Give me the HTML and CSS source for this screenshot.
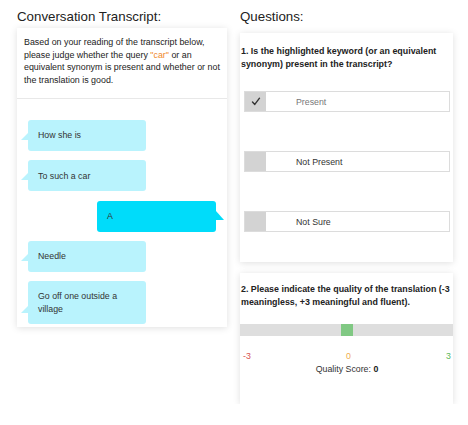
FILE: index.html
```html
<!DOCTYPE html>
<html>
<head>
<meta charset="utf-8">
<link rel="stylesheet" href="styles.css">
</head>
<body>
<div class="page">
  <div class="col col-left">
    <h2 class="title">Conversation Transcript:</h2>
    <div class="card transcript">
      <p class="intro">Based on your reading of the transcript below, please judge whether the query <span class="kw">"car"</span> or an equivalent synonym is present and whether or not the translation is good.</p>
      <div class="chat">
        <div class="bubble in">How she is</div>
        <div class="bubble in">To such a car</div>
        <div class="bubble out">A</div>
        <div class="bubble in">Needle</div>
        <div class="bubble in">Go off one outside a village</div>
      </div>
    </div>
  </div>
  <div class="col col-right">
    <h2 class="title">Questions:</h2>
    <div class="card q1">
      <p class="question">1. Is the highlighted keyword (or an equivalent synonym) present in the transcript?</p>
      <div class="options">
        <div class="option"><span class="box"><svg width="10" height="9" viewBox="0 0 10 9"><path d="M1.5 5 L3.8 7.4 L8.5 1.2" fill="none" stroke="#333" stroke-width="1.4" stroke-linecap="round" stroke-linejoin="round"/></svg></span><span class="opt-label light">Present</span></div>
        <div class="option"><span class="box"></span><span class="opt-label">Not Present</span></div>
        <div class="option"><span class="box"></span><span class="opt-label">Not Sure</span></div>
      </div>
    </div>
    <div class="card q2">
      <p class="question">2. Please indicate the quality of the translation (-3 meaningless, +3 meaningful and fluent).</p>
      <div class="slider"><span class="thumb"></span></div>
      <div class="scale"><span class="neg">-3</span><span class="mid">0</span><span class="pos">3</span></div>
      <div class="score">Quality Score: <b>0</b></div>
    </div>
  </div>
</div>
</body>
</html>
```
FILE: styles.css
```css
* { box-sizing: border-box; }
html, body { margin: 0; padding: 0; background: #fff; }
body { font-family: "Liberation Sans", Arial, sans-serif; color: #333; }
.page { display: flex; gap: 13px; padding: 8px 0 0 17px; }
.col-left { width: 210px; }
.col-right { width: 213px; }
.title { font-weight: normal; font-size: 13.3px; color: #222; margin: 0; line-height: 18px; }
.card { background: #fff; box-shadow: 0 1px 7px rgba(0,0,0,0.13); }
.transcript { margin-top: 2px; padding-bottom: 3px; }
.intro { font-size: 8.9px; line-height: 12.5px; margin: 0; padding: 8px 2px 12px 7px; border-bottom: 1px solid #e8e8e8; color: #222; }
.kw { color: #f08a2c; }
.chat { display: flex; flex-direction: column; gap: 9.3px; padding: 21px 11px 0; }
.bubble { position: relative; width: 118px; min-height: 31px; padding: 9px 10px; font-size: 8.8px; line-height: 12.5px; border-radius: 3px; color: #333; display: flex; align-items: center; }
.bubble.in { background: #b9f3fd; }
.bubble.out { background: #00dcfa; align-self: flex-end; width: 119px; }
.bubble.in::before { content: ""; position: absolute; left: -7px; bottom: 11px; border-style: solid; border-width: 7px 7px 0 0; border-color: transparent #b9f3fd transparent transparent; }
.bubble.out::after { content: ""; position: absolute; right: -8px; top: 10px; border-style: solid; border-width: 9px 0 0 8px; border-color: transparent transparent transparent #00dcfa; }
.q1 { margin-top: 7px; padding: 12px 3px 30px 1px; }
.question { font-size: 8.9px; line-height: 12.5px; font-weight: bold; margin: 0; color: #222; }
.options { display: flex; flex-direction: column; gap: 39px; margin-top: 21px; padding-left: 3px; }
.option { display: flex; height: 21px; border: 1px solid #dcdcdc; align-items: center; }
.box { width: 21px; height: 19px; background: #d3d3d3; display: flex; align-items: center; justify-content: center; }
.opt-label { font-size: 8.8px; margin-left: 30px; color: #333; }
.opt-label.light { color: #777; }
.q2 { margin-top: 11px; padding: 10px 0 29px 1px; }
.slider { margin: 16px 0 0 -1px; height: 12px; background: #dedede; position: relative; }
.thumb { position: absolute; left: 101px; top: 0; width: 12px; height: 12px; background: #80c883; }
.scale { display: flex; justify-content: space-between; font-size: 8.8px; line-height: 11px; margin-top: 15px; padding: 0 2px 0 2px; }
.neg { color: #d9534f; }
.mid { color: #f0ad4e; }
.pos { color: #5cb85c; }
.score { text-align: center; font-size: 8.8px; line-height: 11px; margin-top: 2px; color: #333; }
.score b { color: #222; }
```
